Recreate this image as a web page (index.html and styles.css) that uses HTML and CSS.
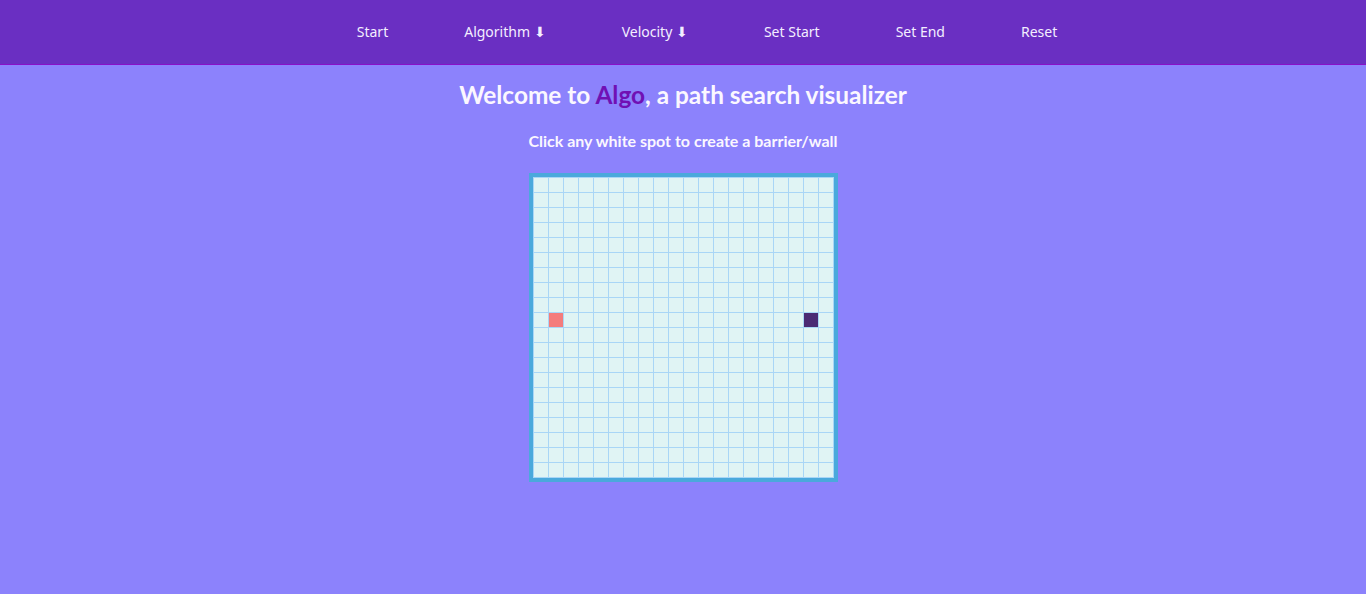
FILE: index.html
```html
<!DOCTYPE html>
<html lang="en">
<head>
<meta charset="utf-8">
<title>Algo</title>
<link rel="stylesheet" href="styles.css">
</head>
<body>
<nav class="nav">
  <ul class="nav-list">
    <li class="nav-item">Start</li>
    <li class="nav-item">Algorithm ⬇</li>
    <li class="nav-item">Velocity ⬇</li>
    <li class="nav-item">Set Start</li>
    <li class="nav-item">Set End</li>
    <li class="nav-item">Reset</li>
  </ul>
</nav>
<main class="main">
  <h1 class="title">Welcome to <span class="brand">Algo</span>, a path search visualizer</h1>
  <p class="subtitle">Click any white spot to create a barrier/wall</p>
  <div class="board" id="board"></div>
</main>
<script src="script.js"></script>
</body>
</html>
```
FILE: styles.css
```css
* { box-sizing: border-box; }
html, body { margin: 0; padding: 0; }
body {
  background: #8c82fc;
  font-family: "Lato", "Open Sans", sans-serif;
  color: #fbf7ff;
  min-height: 594px;
}
.nav {
  background: #6a2fc2;
  border-bottom: 1px solid #8a10c8;
  height: 65px;
}
.nav-list {
  list-style: none;
  margin: 0;
  padding: 0 0 0 48px;
  height: 62px;
  display: flex;
  justify-content: center;
  align-items: center;
  gap: 76px;
  font-family: "Noto Sans", sans-serif;
  font-size: 14px;
}
.nav-item { color: #f3eeff; }
.main {
  display: flex;
  flex-direction: column;
  align-items: center;
}
.title {
  margin: 14px 0 0;
  font-size: 24.4px;
  line-height: 32px;
  font-weight: 700;
  color: #fbf7ff;
}
.brand { color: #7010b4; }
.subtitle {
  margin: 19px 0 0;
  font-size: 16px;
  line-height: 22px;
  font-weight: 700;
}
.board {
  margin-top: 21px;
  border: 4px solid #4aa9dc;
  background: #a9d6f6;
  padding: 1px;
  display: grid;
  grid-template-columns: repeat(20, 14px);
  grid-auto-rows: 14px;
  gap: 1px;
}
.cell { background: #e0f4f4; }
.cell.start { background: #f47c7c; }
.cell.end { background: #4b2a74; }
```
FILE: script.js
```js
var board = document.getElementById('board');
for (var r = 0; r < 20; r++) {
  for (var c = 0; c < 20; c++) {
    var d = document.createElement('div');
    d.className = 'cell';
    if (r === 9 && c === 1) d.className += ' start';
    if (r === 9 && c === 18) d.className += ' end';
    board.appendChild(d);
  }
}
```
